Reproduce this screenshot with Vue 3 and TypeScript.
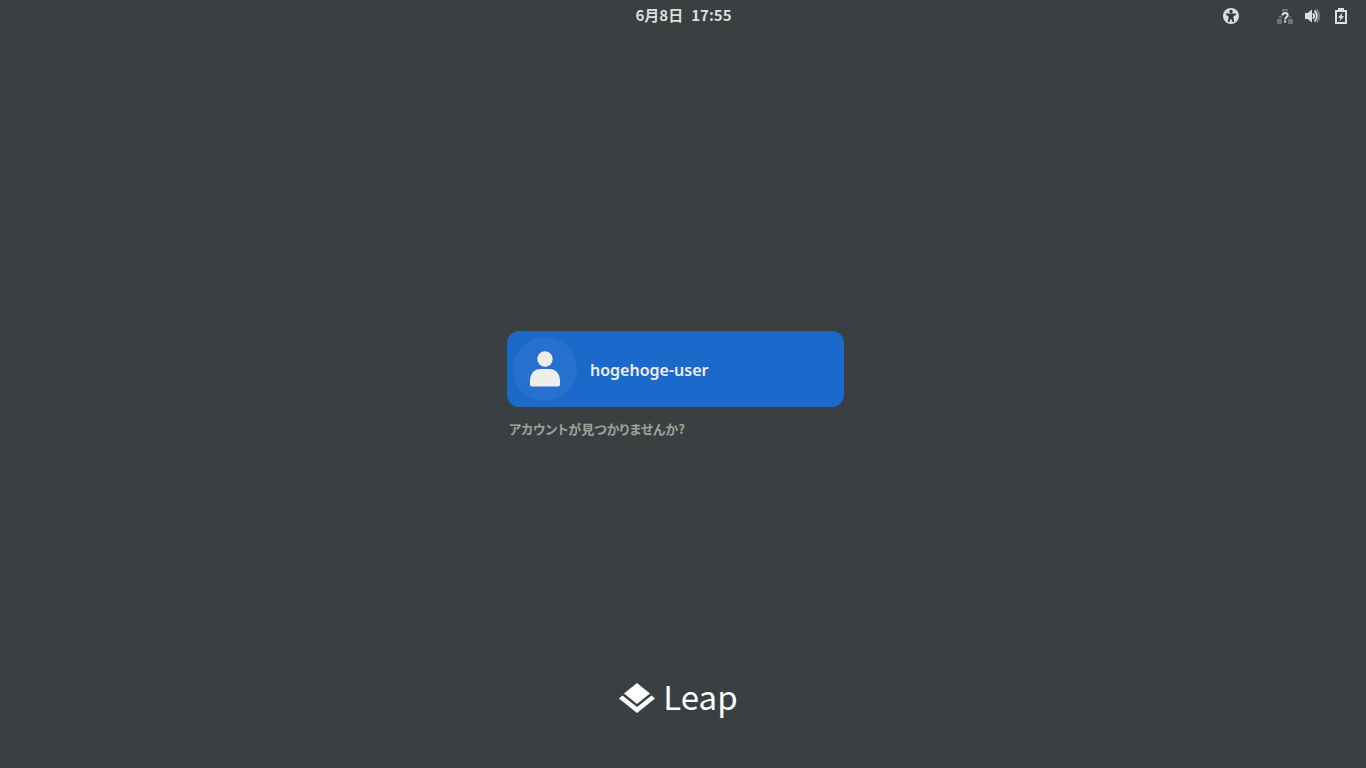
<script setup lang="ts">
import { ref } from 'vue'

interface User {
  id: number
  name: string
}

const date = '6月8日'
const time = '17:55'
const users = ref<User[]>([{ id: 1, name: 'hogehoge-user' }])
</script>

<template>
  <div class="screen">
    <header class="panel">
      <button class="clock" type="button">
        <span>{{ date }}</span>
        <time>{{ time }}</time>
      </button>
      <div class="status">
        <button class="indicator" type="button" aria-label="アクセシビリティ">
          <svg width="16" height="16" viewBox="0 0 16 16">
            <circle cx="8" cy="8" r="8" fill="#dededc" />
            <circle cx="8" cy="3.500" r="1.700" fill="#33383b" />
            <path d="M3 5.500h10v1.500L10.500 8v2l.7 4H9.500L8.300 11h-.6L6.500 14H4.800l.7-4V8L3 7z" fill="#33383b" />
          </svg>
        </button>
        <button class="indicator system" type="button" aria-label="システム">
          <svg width="16" height="16" viewBox="0 0 16 16">
            <path d="M5 1h6v4H5zM0 11h5v5H0zM11 11h5v5h-5zM2 8h3v2H2zM11 8h3v2h-3z" fill="#6f7375" />
            <path d="M5.500 7.500C5.500 6 6.700 5 8.200 5S10.700 6 10.700 7.300C10.700 9 8.200 9 8.200 11.500M8.200 12v2" fill="none" stroke="#3a3f42" stroke-width="4" />
            <path d="M5.500 7.500C5.500 6 6.700 5 8.200 5S10.700 6 10.700 7.300C10.700 9 8.200 9 8.200 11.500" fill="none" stroke="#dededc" stroke-width="2" />
            <path d="M7 12.500h2.300v2H7z" fill="#dededc" />
          </svg>
          <svg width="16" height="16" viewBox="0 0 16 16">
            <path d="M0 5h2.500L7 1.500v13L2.500 11H0z" fill="#dededc" />
            <path d="M8 5.300a4 4 0 0 1 0 5.400" fill="none" stroke="#dededc" stroke-width="2" />
            <path d="M9.500 2.500a7.500 7.500 0 0 1 0 11" fill="none" stroke="#dededc" stroke-width="1.800" />
            <path d="M11.500 1.500a9 9 0 0 1 0 13" fill="none" stroke="#75797b" stroke-width="2" />
          </svg>
          <svg width="16" height="16" viewBox="0 0 16 16">
            <path d="M5 0h6v2h3v14H2V2h3zM4 4v10h8V4z" fill="#dededc" fill-rule="evenodd" />
            <path d="M9.500 4.500 4.800 9.700h2.700L6.500 13.500 11.200 8.300H8.500z" fill="#dededc" />
          </svg>
        </button>
      </div>
    </header>

    <main class="login">
      <div class="user-list">
        <button v-for="user in users" :key="user.id" class="user" type="button">
          <span class="avatar">
            <svg width="32" height="36" viewBox="0 0 32 36">
              <circle cx="16" cy="8" r="7.700" fill="#eeeeec" />
              <path d="M1 30C1 22.500 5.500 18 11.500 18h9C26.500 18 31 22.500 31 30v3.500q0 2-2 2H3q-2 0-2-2z" fill="#eeeeec" />
            </svg>
          </span>
          <span class="name">{{ user.name }}</span>
        </button>
        <button class="not-listed" type="button">アカウントが見つかりませんか?</button>
      </div>
    </main>

    <footer class="brand">
      <svg width="36" height="30" viewBox="0 0 36 30">
        <path d="M18 0 31 10.500 18 21 5 10.500z" fill="#fff" />
        <path d="M3.500 12.500 18 24 32.500 12.500 36 15.500 18 30 0 15.500z" fill="#fff" />
      </svg>
      <span>Leap</span>
    </footer>
  </div>
</template>

<style>
body {
  margin: 0;
  background: #3a3f42;
}
</style>

<style scoped>
.screen {
  display: flex;
  flex-direction: column;
  min-height: 100vh;
  background: #3a3f42;
  color: #dededc;
  font-family: "Noto Sans CJK JP", sans-serif;
}

button {
  margin: 0;
  padding: 0;
  border: 0;
  background: none;
  color: inherit;
  font: inherit;
}

.panel {
  display: grid;
  grid-template-columns: 1fr auto 1fr;
  align-items: center;
  height: 32px;
  padding: 0 17px;
}

.clock {
  grid-column: 2;
  display: flex;
  gap: 8px;
  padding: 0 0 2px 1px;
  font-size: 15px;
  font-weight: 700;
  line-height: 20px;
}

.status {
  display: flex;
  justify-content: flex-end;
  gap: 38px;
}

.indicator {
  display: flex;
  gap: 12px;
}

svg {
  display: block;
}

.login {
  flex: 1;
  display: flex;
  align-items: center;
  justify-content: center;
  padding: 55px 15px 0 0;
}

.user-list {
  display: flex;
  flex-direction: column;
  align-items: flex-start;
  gap: 12px;
  width: 337px;
}

.user {
  display: flex;
  align-items: center;
  gap: 13px;
  width: 100%;
  padding: 6px;
  border-radius: 12px;
  background: #1b6acb;
  color: #eeeeec;
}

.avatar {
  display: flex;
  align-items: center;
  justify-content: center;
  width: 64px;
  height: 64px;
  border-radius: 50%;
  background: #2671cd;
}

.name {
  padding-top: 2px;
  font-family: "Noto Sans", sans-serif;
  font-size: 16px;
  font-weight: 600;
  line-height: 24px;
}

.not-listed {
  padding: 0 2px;
  color: #a3a299;
  font-size: 13px;
  font-weight: 700;
  font-feature-settings: "palt";
  line-height: 20px;
}

.brand {
  display: flex;
  align-items: flex-start;
  justify-content: center;
  gap: 8px;
  padding: 0 9px 55px 0;
  color: #fff;
  font-size: 33px;
  line-height: 26px;
}
</style>
